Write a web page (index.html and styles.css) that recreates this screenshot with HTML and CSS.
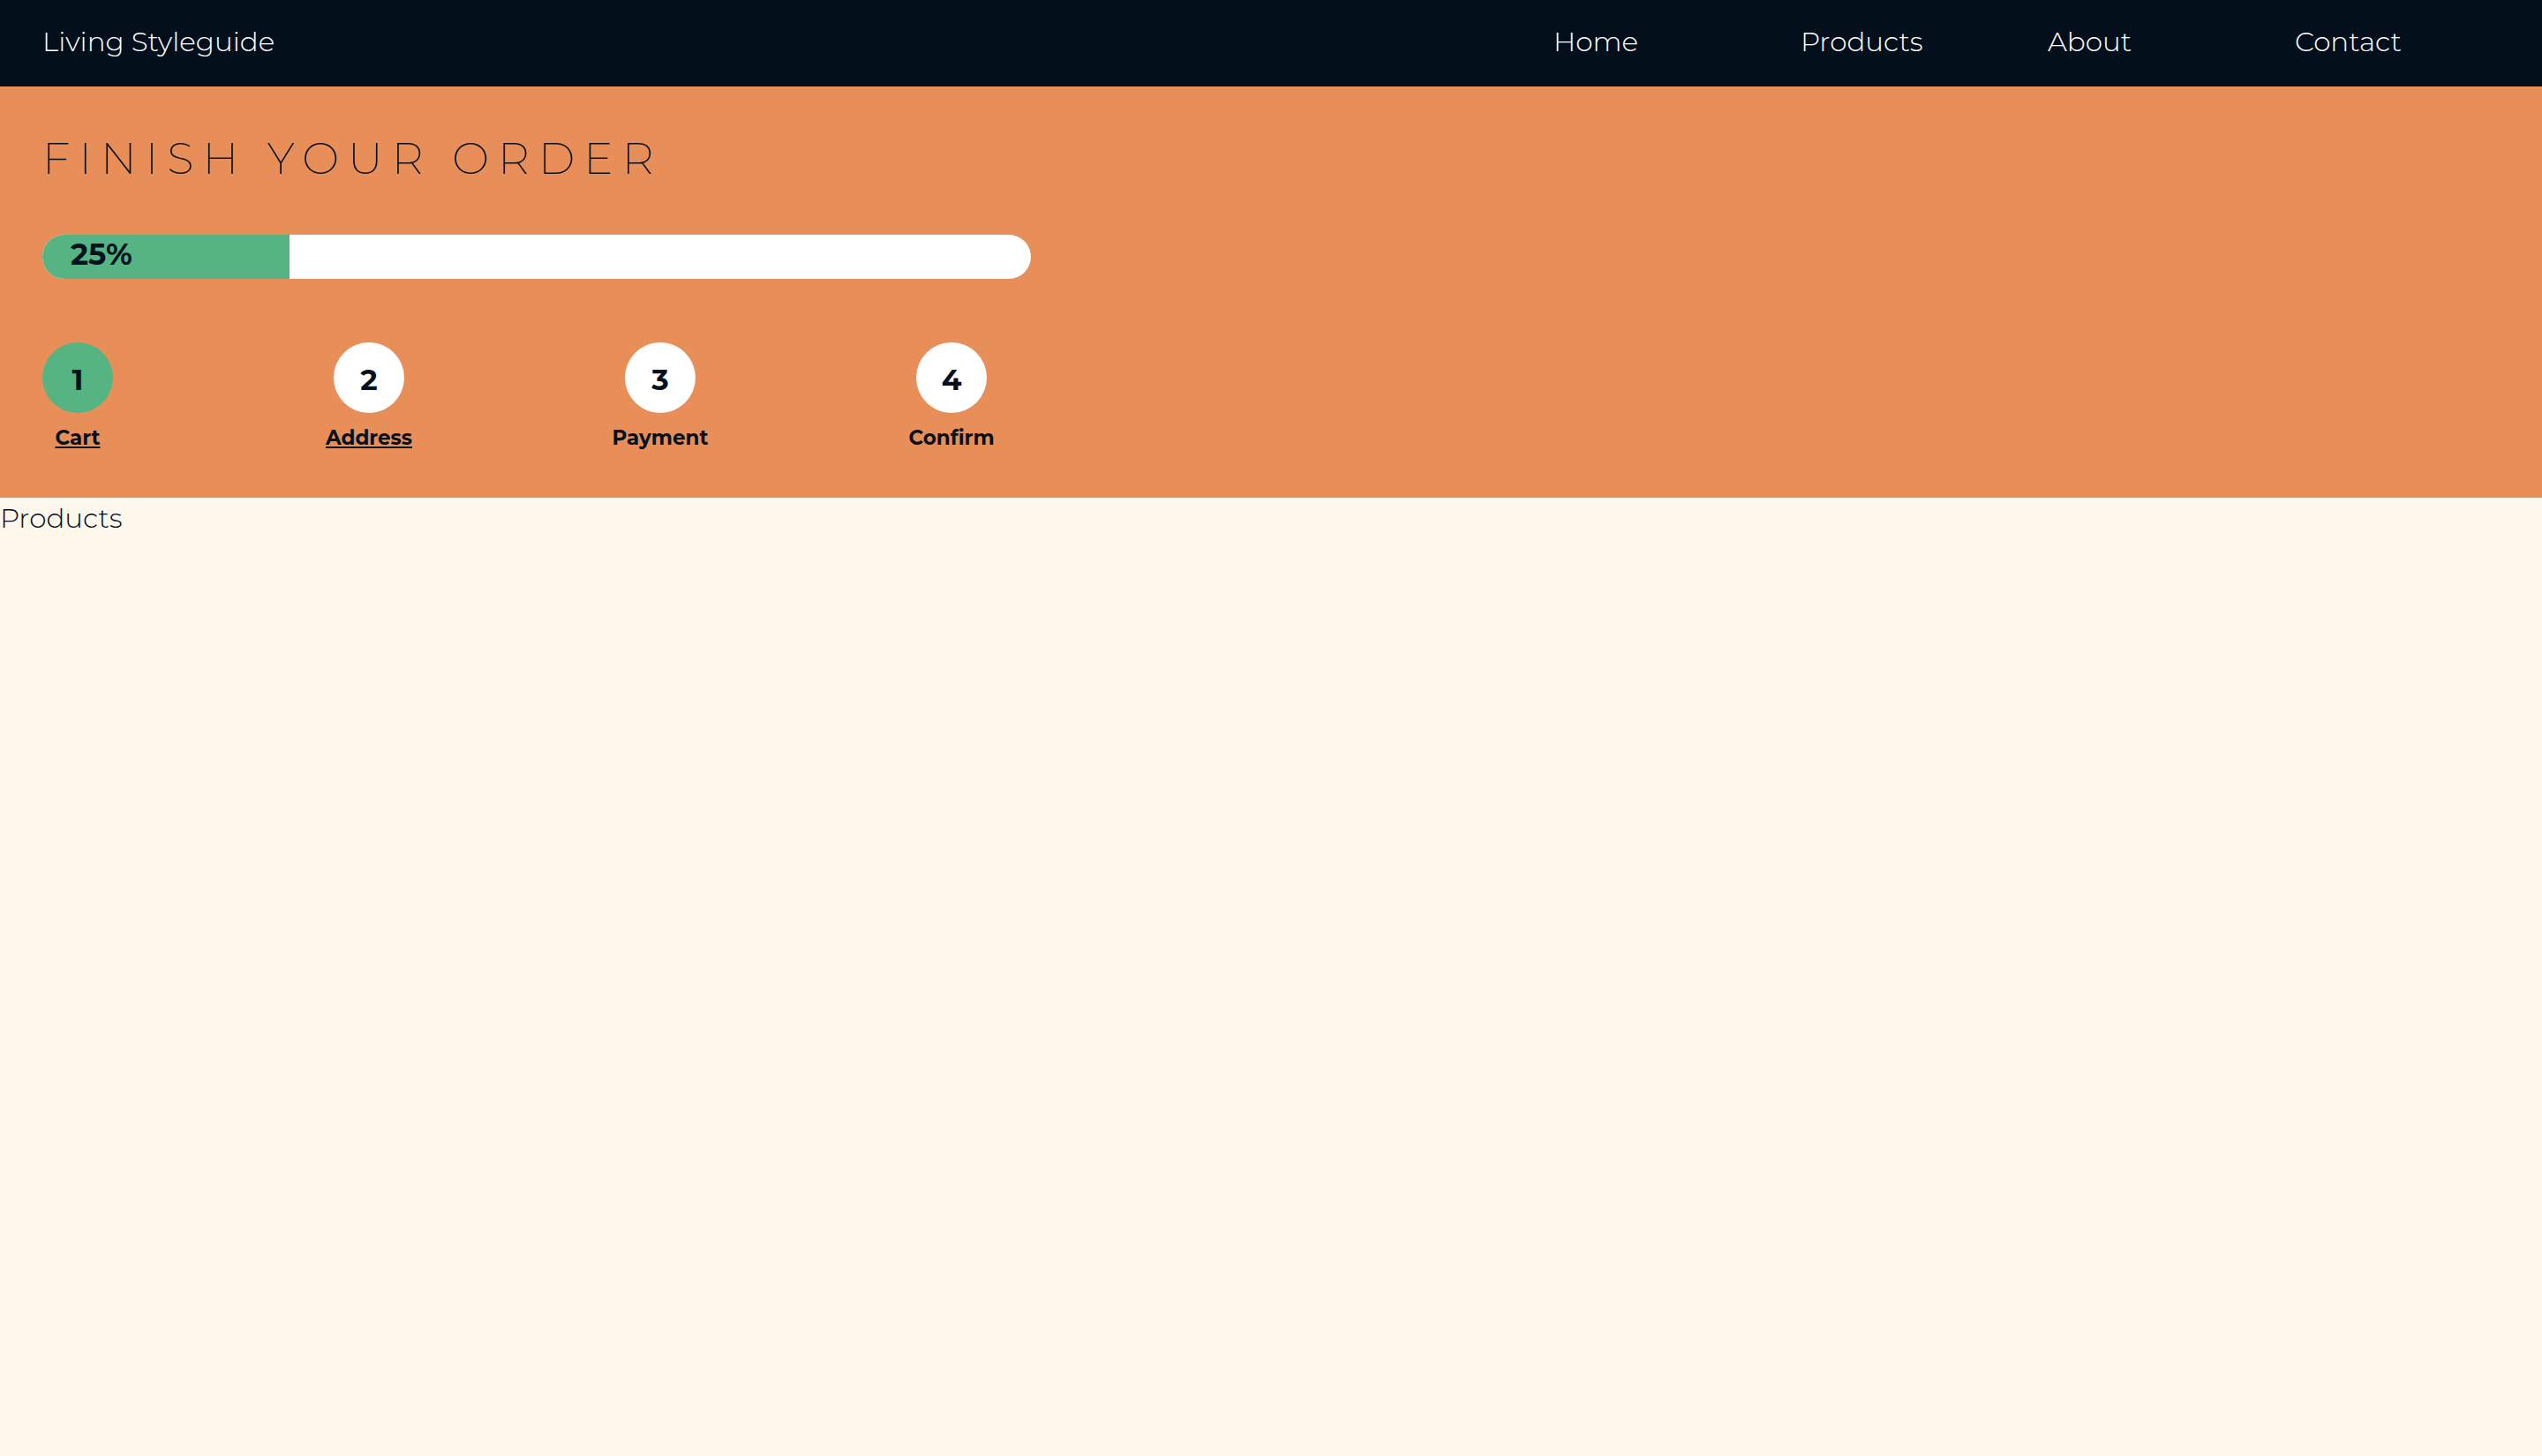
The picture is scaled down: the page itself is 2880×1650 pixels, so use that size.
FILE: index.html
```html
<!DOCTYPE html>
<html lang="en">
<head>
<meta charset="utf-8">
<title>Living Styleguide</title>
<link rel="stylesheet" href="styles.css">
</head>
<body>
<nav class="topnav">
  <a class="brand" href="#">Living Styleguide</a>
  <ul class="menu">
    <li><a href="#">Home</a></li>
    <li><a href="#">Products</a></li>
    <li><a href="#">About</a></li>
    <li><a href="#">Contact</a></li>
  </ul>
</nav>
<header class="order">
  <h1 class="order-title">Finish your order</h1>
  <div class="progress">
    <div class="progress-fill" style="width:25%"><span class="progress-label">25%</span></div>
  </div>
  <ol class="steps">
    <li class="step step-done"><span class="step-num">1</span><a class="step-label" href="#">Cart</a></li>
    <li class="step"><span class="step-num">2</span><a class="step-label" href="#">Address</a></li>
    <li class="step"><span class="step-num">3</span><span class="step-label">Payment</span></li>
    <li class="step"><span class="step-num">4</span><span class="step-label">Confirm</span></li>
  </ol>
</header>
<main class="content">Products</main>
</body>
</html>
```
FILE: styles.css
```css
html, body {
  margin: 0;
  padding: 0;
}
body {
  background: #fef7ec;
  color: #04111e;
  font-family: "Montserrat", "DejaVu Sans", "Open Sans", sans-serif;
  font-weight: 300;
  min-height: 1650px;
}
a { color: inherit; }

.topnav {
  height: 98px;
  box-sizing: border-box;
  padding-bottom: 5px;
  background: #03101c;
  display: flex;
  align-items: center;
  justify-content: space-between;
  padding-left: 48px;
}
.brand {
  color: #ffffff;
  text-decoration: none;
  font-size: 31px;
  font-weight: 300;
}
.menu {
  list-style: none;
  margin: 0;
  padding: 0;
  display: flex;
}
.menu li {
  width: 280px;
}
.menu a {
  color: #ffffff;
  text-decoration: none;
  font-size: 31px;
  font-weight: 300;
}

.order {
  background: #e88e59;
  height: 466px;
  box-sizing: border-box;
  padding: 0 48px;
  overflow: hidden;
}
.order-title {
  margin: 52px 0 0;
  font-size: 50px;
  line-height: 60px;
  font-weight: 200;
  letter-spacing: 10px;
  text-transform: uppercase;
}
.progress {
  margin-top: 56px;
  width: 1120px;
  height: 50px;
  background: #ffffff;
  border-radius: 25px;
  overflow: hidden;
}
.progress-fill {
  height: 100%;
  background: #55b482;
  display: flex;
  align-items: center;
  padding-left: 32px;
  padding-bottom: 6px;
  box-sizing: border-box;
}
.progress-label {
  font-size: 34px;
  font-weight: 700;
}
.steps {
  list-style: none;
  margin: 72px 0 0;
  padding: 0;
  display: flex;
  gap: 250px;
}
.step {
  width: 80px;
  display: flex;
  flex-direction: column;
  align-items: center;
}
.step-num {
  width: 80px;
  height: 80px;
  box-sizing: border-box;
  padding-top: 3px;
  border-radius: 50%;
  background: #ffffff;
  display: flex;
  align-items: center;
  justify-content: center;
  font-size: 33px;
  font-weight: 700;
}
.step-done .step-num {
  background: #55b482;
}
.step-label {
  margin-top: 14px;
  font-size: 23px;
  font-weight: 700;
  white-space: nowrap;
}
.content {
  display: block;
  font-size: 31px;
  line-height: 46px;
  font-weight: 300;
}
```
